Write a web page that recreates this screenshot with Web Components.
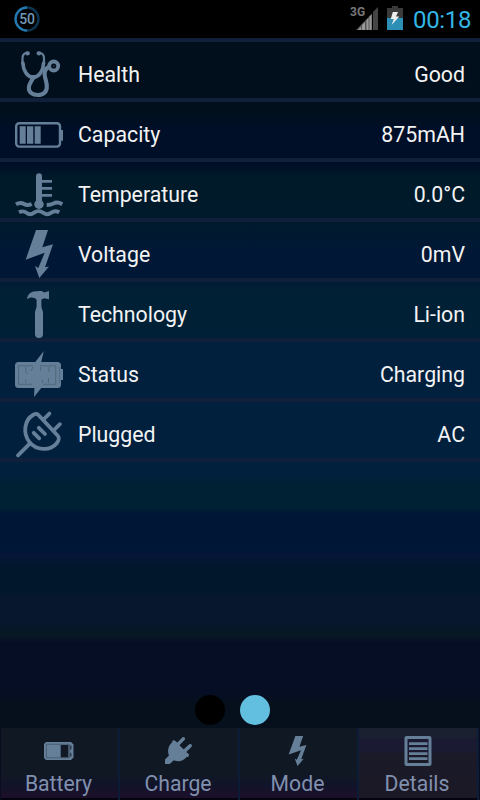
<!DOCTYPE html>
<html lang="en">
<head>
<meta charset="utf-8">
<title>Battery details</title>
<style>
    html, body {
        margin: 0;
        padding: 0;
        background: #000;
    }
    body {
        width: 480px;
        height: 800px;
        overflow: hidden;
        font-family: Roboto, "Noto Sans", sans-serif;
    }
</style>
</head>
<body>
<battery-app>
    <status-bar slot="status" percent="50" network="3G">00:18</status-bar>

    <detail-row icon="health" value="Good">Health</detail-row>
    <detail-row icon="capacity" value="875mAH">Capacity</detail-row>
    <detail-row icon="temperature" value="0.0°C">Temperature</detail-row>
    <detail-row icon="voltage" value="0mV">Voltage</detail-row>
    <detail-row icon="technology" value="Li-ion">Technology</detail-row>
    <detail-row icon="status" value="Charging">Status</detail-row>
    <detail-row icon="plugged" value="AC">Plugged</detail-row>

    <page-dots slot="dots" count="2" current="1"></page-dots>

    <nav-tab slot="tabs" icon="tab-battery">Battery</nav-tab>
    <nav-tab slot="tabs" icon="tab-charge">Charge</nav-tab>
    <nav-tab slot="tabs" icon="tab-mode">Mode</nav-tab>
    <nav-tab slot="tabs" icon="tab-details" selected>Details</nav-tab>
</battery-app>

<script>
// =================================================================================
// Icons: row icons are drawn on a 48 grid, tab icons on a 30 grid
// =================================================================================

const BOLT = 'M21 0H33L27.3 17.3L38 14.3L30 37.3L34 36.5L24.3 48L20 36L23.3 38L29.7 22.7L10.7 29.7Z';

const ICONS = {
    health: `
        <g fill="none" stroke="currentColor" stroke-linecap="round">
            <path stroke-width="2.2" d="M11.5 2.8C8.5 3.5 7.3 6 7.5 9V14"/>
            <path stroke-width="2.2" d="M25 2.8C28 3.5 29.2 6 29 9V14"/>
            <path stroke-width="4.2" d="M12.2 3.3H12.8M23.6 3.3H24.2"/>
            <path stroke-width="3.6" d="M7.9 13C8.2 20 12 26.5 17 27.2H19.4C24.5 26.5 28.3 20 28.6 13"/>
            <path stroke-width="4.1" d="M18 27.5C17.5 31 13.8 33 13.8 37.5C13.8 42.5 17.5 45 22.8 45C28.5 45 32 42 31.8 36C31.6 31 29.8 28 29.6 24.5C29.5 20.5 31 18 34 17"/>
        </g>
        <path fill="currentColor" d="M12.5 25L18 31L24.5 25Z"/>
        <circle cx="38.7" cy="16" r="4.5" fill="none" stroke="currentColor" stroke-width="3.8"/>
        <circle cx="38.7" cy="16" r="0.8" fill="currentColor" opacity=".5"/>`,
    capacity: `
        <rect x="1.2" y="13.2" width="43.8" height="23.4" rx="3" fill="none" stroke="currentColor" stroke-width="2.4"/>
        <g fill="currentColor">
            <path d="M45.5 20H48V30.7H45.5Z"/>
            <path d="M4.7 16.3H10.7V33.7H4.7ZM12 16.3H18.3V33.7H12ZM19.7 16.3H25.7V33.7H19.7Z"/>
        </g>`,
    temperature: `
        <g fill="currentColor">
            <path d="M21 33V6.3A3 3 0 0 1 27 6.3V33Z"/>
            <circle cx="24" cy="34.3" r="4.7"/>
            <path d="M26 10H37V12.8H26ZM26 17H37V19.8H26ZM26 24H37V26.8H26Z"/>
        </g>
        <g fill="none" stroke="currentColor" stroke-width="3.9">
            <path d="M1 34.3C4 32.5 6.5 32.5 9 34C11.5 35.5 13.5 35.5 16.7 34"/>
            <path d="M31.7 35C34 35 35.8 35 38.2 33.6C41 32 44 32.3 47.3 34.2"/>
            <path d="M4 42.3C7 40.8 9.2 41 11.5 42.8C14 44.8 16.3 44.8 18.8 42.8C22 40.5 25 40.5 28.3 42.8C31 44.8 33.5 44.8 36 42.8C38.5 41 41.5 40.8 44.3 42.3"/>
        </g>`,
    voltage: `<path fill="currentColor" d="${BOLT}"/>`,
    technology: `
        <path fill="currentColor" d="M12 9.3C12.5 5 15 2.3 19 1.6C22 1 25 .9 27.3 1.2L29.2 2.4L34 1V9.2L29.2 8.2L26.4 9.5V16.7L28 22V44.5C28 47 26 48 24 48S20 47 20 44.5V22L21.6 16.7V9.8C19.5 7.2 15.5 6.5 12 9.3Z"/>`,
    status: `
        <g fill="currentColor">
            <rect x="0" y="12" width="46" height="26" rx="3.5"/>
            <path d="M45.5 19H48V30H45.5Z"/>
            <path d="M19.5 13L28.8 1L26 13ZM19.5 37L19 47L27 37Z"/>
        </g>
        <g fill="none" stroke="#43606f" stroke-width=".7">
            <path d="M18 15.8H3.6V34.3H17M28 34.3H40.7V15.8H25"/>
            <path d="M10.8 17V22L13 24M10.8 33V29M25.5 17V21M34 17V22M27.5 30V33M33.5 28V33M18 17L16 21"/>
            <path d="M44.5 17V33" stroke-width=".5"/>
        </g>`,
    plugged: `
        <g fill="none" stroke="currentColor" stroke-width="3.8" stroke-linecap="round" stroke-linejoin="round">
            <path d="M3 45.3L15 33.3"/>
            <path d="M23.2 4.8C21.8 3.4 20 3.8 18 5C9.5 10 7.5 23 14.3 31.8C21 40.5 35 41.3 41.5 33.5C43.8 30.8 44.5 27.6 42.8 25.8Z"/>
            <path d="M28.5 9.5L34.4 3.6M38.5 20.5L44.9 14.2"/>
            <path d="M18.7 22.8L24.2 28.3M23.8 17.8L30 24"/>
        </g>`,
    'tab-battery': `
        <path fill="currentColor" d="M2 6H27L29.5 8.5V21.5L27 24H2L0 22V8Z"/>
        <path fill="#101925" d="M16.7 9H24.4V21.5H16.7Z"/>
        <path fill="none" stroke="#3d5263" stroke-width=".7" d="M2.4 8.3H25.5V21.8H2.4Z"/>
        <path fill="#1b2a38" d="M26.2 9.5H27.4V13L26.2 14ZM26.2 16.5L27.4 17.5V20.5H26.2Z"/>`,
    'tab-charge': `
        <path fill="currentColor" d="M1 28V23.5L5 19.5C3.3 15.5 4.1 10 7.8 6.8L8.8 4.2L10.8 4.5L13.7 7L18.6 1.6C20.4 .8 21.6 2 20.9 3.6L15.5 9.2L20.3 14L25.6 8.5C27.4 7.9 28.4 9 27.6 10.7L22.3 16L25.1 18.6L24.7 20.6L22.3 21.2C19 25.3 14.3 26 9.9 24.2L5.7 28Z"/>
        <path fill="none" stroke="currentColor" stroke-width="3" stroke-linecap="round" d="M14 8L19.2 2.9M20.5 14.6L26 9.5"/>`,
    'tab-mode': `<path fill="currentColor" transform="translate(-1.3 0) scale(.65 .625)" d="${BOLT}"/>`,
    'tab-details': `
        <rect x="3" y="1.5" width="24" height="27" rx=".6" fill="none" stroke="currentColor" stroke-width="3"/>
        <path stroke="currentColor" stroke-width="2.8" d="M6 7.6H24.5M6 12.6H24.5M6 17.6H24.5M6 22.6H24.5"/>`
};

class AppIcon extends HTMLElement {
    connectedCallback() {
        const size = this.getAttribute('size') || '48';
        this.attachShadow({ mode: 'open' }).innerHTML = `
            <style>
                :host { display: block; flex: none; color: #667f99; }
                svg { display: block; overflow: visible; }
            </style>
            <svg width="${size}" height="${size}" viewBox="0 0 ${size} ${size}">${ICONS[this.getAttribute('name')] || ''}</svg>
        `;
    }
}

// =================================================================================
// Status bar
// =================================================================================

class StatusBar extends HTMLElement {
    connectedCallback() {
        this.attachShadow({ mode: 'open' }).innerHTML = `
            <style>
                :host {
                    display: flex;
                    align-items: flex-start;
                    box-sizing: border-box;
                    height: 38px;
                    padding: 0 9px 0 14px;
                    background: #000;
                }
                svg { display: block; flex: none; }
                .level { display: grid; place-items: center; margin-top: 6px; }
                .level > * { grid-area: 1 / 1; }
                .level span { font: 500 14px/26px Roboto, sans-serif; letter-spacing: -.3px; color: #7099b8; }
                .network { margin: 5px 0 0 auto; font: bold 12px/14px Roboto, sans-serif; color: #777; width: 16px; }
                .signal { margin: 7px 0 0 -10px; }
                .battery { margin: 6px 0 0 9px; }
                .clock { margin-left: 10px; width: 58px; font-size: 24px; line-height: 40px; letter-spacing: -.35px; white-space: nowrap; color: #33b5e5; }
            </style>
            <div class="level">
                <svg width="26" height="26" viewBox="0 0 26 26" fill="none" stroke-width="2.4">
                    <path stroke="#0c3350" d="M13 1.5A11.5 11.5 0 0 1 13 24.5"/>
                    <path stroke="#2478b0" d="M13 24.5A11.5 11.5 0 0 1 13 1.5"/>
                </svg>
                <span>${this.getAttribute('percent')}</span>
            </div>
            <div class="network">${this.getAttribute('network')}</div>
            <svg class="signal" width="22" height="23" viewBox="0 0 22 23">
                <path fill="#555" d="M0 23L16 6.5V23Z"/>
                <path fill="#999" d="M2 23L5 19.5V23ZM6 23V18L9 15V23ZM10.5 23V13L12.5 11V23ZM13.5 23V9.5L15.5 7.5V23Z"/>
                <path fill="#444" d="M17 23V5L22 0V23Z"/>
            </svg>
            <svg class="battery" width="16" height="24" viewBox="0 0 16 24">
                <path fill="#3a3a3a" d="M5 0H11V2H16V12H0V2H5Z"/>
                <path fill="#2c8fb5" d="M0 12H16V24H0Z"/>
                <path fill="#eee" d="M5.8 6H11L9 10.5H12.3L4.6 19L6.8 13H3.8Z"/>
            </svg>
            <div class="clock"><slot></slot></div>
        `;
    }
}

// =================================================================================
// Detail row
// =================================================================================

class DetailRow extends HTMLElement {
    connectedCallback() {
        this.attachShadow({ mode: 'open' }).innerHTML = `
            <style>
                :host {
                    display: flex;
                    align-items: flex-start;
                    box-sizing: border-box;
                    height: 60px;
                    padding: 8px 15px 0;
                    border-bottom: 4px solid #10203a;
                    font-size: 21.3px;
                    color: #f3f3f3;
                }
                .label, .value { line-height: 46px; padding-top: 2px; white-space: nowrap; }
                .label { flex: 1; margin-left: 15px; }
            </style>
            <app-icon name="${this.getAttribute('icon')}"></app-icon>
            <span class="label"><slot></slot></span>
            <span class="value">${this.getAttribute('value')}</span>
        `;
    }
}

// =================================================================================
// Page dots
// =================================================================================

class PageDots extends HTMLElement {
    connectedCallback() {
        const count = Number(this.getAttribute('count'));
        const current = Number(this.getAttribute('current'));
        let dots = '';
        for (let i = 0; i < count; i++) {
            dots += `<i class="${i === current ? 'on' : ''}"></i>`;
        }
        this.attachShadow({ mode: 'open' }).innerHTML = `
            <style>
                :host { display: flex; justify-content: center; gap: 15px; padding: 0 15px 3px 0; }
                i { width: 30px; height: 30px; border-radius: 50%; background: #000; }
                i.on { background: #62bfe0; }
            </style>
            ${dots}
        `;
    }
}

// =================================================================================
// Bottom tab
// =================================================================================

class NavTab extends HTMLElement {
    connectedCallback() {
        this.attachShadow({ mode: 'open' }).innerHTML = `
            <style>
                :host {
                    display: flex;
                    flex-direction: column;
                    align-items: center;
                    box-sizing: border-box;
                    padding: 8px 1px 0 0;
                    border-right: 2px solid #0d1c36;
                    font-size: 21.2px;
                    color: #8190ae;
                    background: linear-gradient(#101824 0, #101824 46px, #11132a 58px, #1a1029 66px, #1a1029 70px, #05030f 70px);
                }
                :host([selected]) {
                    background: linear-gradient(#1a2030 0, #1a2030 9px, #1b1a33 11px, #1b1a33 23px, #1b1a28 26px, #1b1926 70px, #05030f 70px);
                }
                .label { line-height: 34px; padding: 1px 1px 0 0; white-space: nowrap; }
            </style>
            <app-icon name="${this.getAttribute('icon')}" size="30"></app-icon>
            <span class="label"><slot></slot></span>
        `;
    }
}

// =================================================================================
// App shell
// =================================================================================

class BatteryApp extends HTMLElement {
    connectedCallback() {
        this.attachShadow({ mode: 'open' }).innerHTML = `
            <style>
                :host {
                    display: flex;
                    flex-direction: column;
                    width: 480px;
                    height: 800px;
                    background: linear-gradient(
                        #000f1b 0, #000f1b 112px, #000f28 130px, #000f28 164px,
                        #001a29 178px, #001a2c 220px, #001835 250px, #001836 278px,
                        #002035 290px, #002035 332px, #00203e 342px, #00203e 474px,
                        #002034 486px, #002034 508px, #001636 514px, #001636 550px,
                        #071638 556px, #00172c 566px, #00172c 590px, #06172e 596px, #06172e 624px,
                        #081724 632px, #081724 636px, #060e26 643px, #060e26 692px,
                        #060f1c 702px, #060f1c 728px, #0a0d20 728px);
                }
                .list { border-top: 4px solid #10203a; flex: 1; }
                .tabs { display: grid; grid-template-columns: 119px 120px 119px 120px; height: 72px; padding-left: 1px; }
            </style>
            <slot name="status"></slot>
            <div class="list"><slot></slot></div>
            <slot name="dots"></slot>
            <div class="tabs"><slot name="tabs"></slot></div>
        `;
    }
}

customElements.define('app-icon', AppIcon);
customElements.define('status-bar', StatusBar);
customElements.define('detail-row', DetailRow);
customElements.define('page-dots', PageDots);
customElements.define('nav-tab', NavTab);
customElements.define('battery-app', BatteryApp);
</script>
</body>
</html>
